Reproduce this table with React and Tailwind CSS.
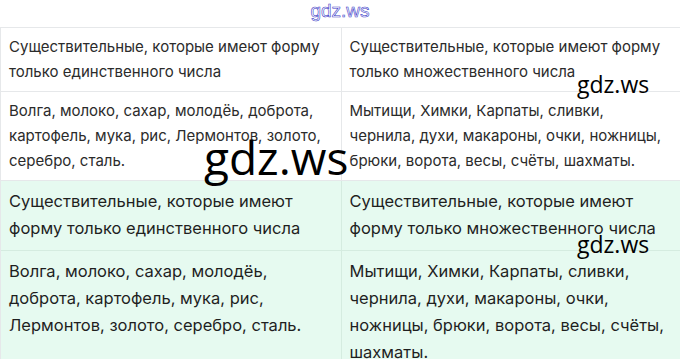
export default function App() {
  const rows = [
    {
      green: false,
      left: 'Существительные, которые имеют форму только единственного числа',
      right: 'Существительные, которые имеют форму только множественного числа',
    },
    {
      green: false,
      left: 'Волга, молоко, сахар, молодёь, доброта, картофель, мука, рис, Лермонтов, золото, серебро, сталь.',
      right: 'Мытищи, Химки, Карпаты, сливки, чернила, духи, макароны, очки, ножницы, брюки, ворота, весы, счёты, шахматы.',
    },
    {
      green: true,
      left: 'Существительные, которые имеют форму только единственного числа',
      right: 'Существительные, которые имеют форму только множественного числа',
    },
    {
      green: true,
      left: 'Волга, молоко, сахар, молодёь, доброта, картофель, мука, рис, Лермонтов, золото, серебро, сталь.',
      right: 'Мытищи, Химки, Карпаты, сливки, чернила, духи, макароны, очки, ножницы, брюки, ворота, весы, счёты, шахматы.',
    },
  ];

  return (
    <div className="relative w-[680px] h-[359px] overflow-hidden bg-white font-['Inter',sans-serif]">
      {/* top watermark */}
      <div className="h-[27px] flex justify-center items-start">
        <span className="font-['Liberation_Sans',sans-serif] text-[19px] leading-[22px] text-white [-webkit-text-stroke:0.6px_#3c3cc8]">
          gdz.ws
        </span>
      </div>

      <div className="border-t border-l border-[#e6e8ea]">
        {rows.map((r, i) => (
          <div
            key={i}
            className={`grid grid-cols-2 border-b ${r.green ? 'bg-[#e6faf0] border-[#d5ece0] text-[#1f1f1f] text-[16.5px] leading-[27px]' : 'bg-white border-[#e6e8ea] text-[#2b2b2b] text-[15px] leading-[25px]'}`}
          >
            <div className={`pl-2 pr-3 ${r.green ? 'pt-[7px] pb-[8px]' : 'pt-[6px] pb-[7px]'}`}>{r.left}</div>
            <div className={`pl-2 pr-3 border-l ${r.green ? 'border-[#d5ece0] pt-[7px] pb-[8px]' : 'border-[#e6e8ea] pt-[6px] pb-[7px]'}`}>{r.right}</div>
          </div>
        ))}
      </div>

      {/* watermarks over content */}
      <span className="absolute left-[204px] top-[134px] font-['Open_Sans',sans-serif] font-medium text-[46px] leading-none text-black">
        gdz.ws
      </span>
      <span className="absolute left-[577px] top-[73px] font-['Open_Sans',sans-serif] text-[23px] leading-none text-black">
        gdz.ws
      </span>
      <span className="absolute left-[577px] top-[233px] font-['Open_Sans',sans-serif] text-[23px] leading-none text-black">
        gdz.ws
      </span>
    </div>
  );
}
